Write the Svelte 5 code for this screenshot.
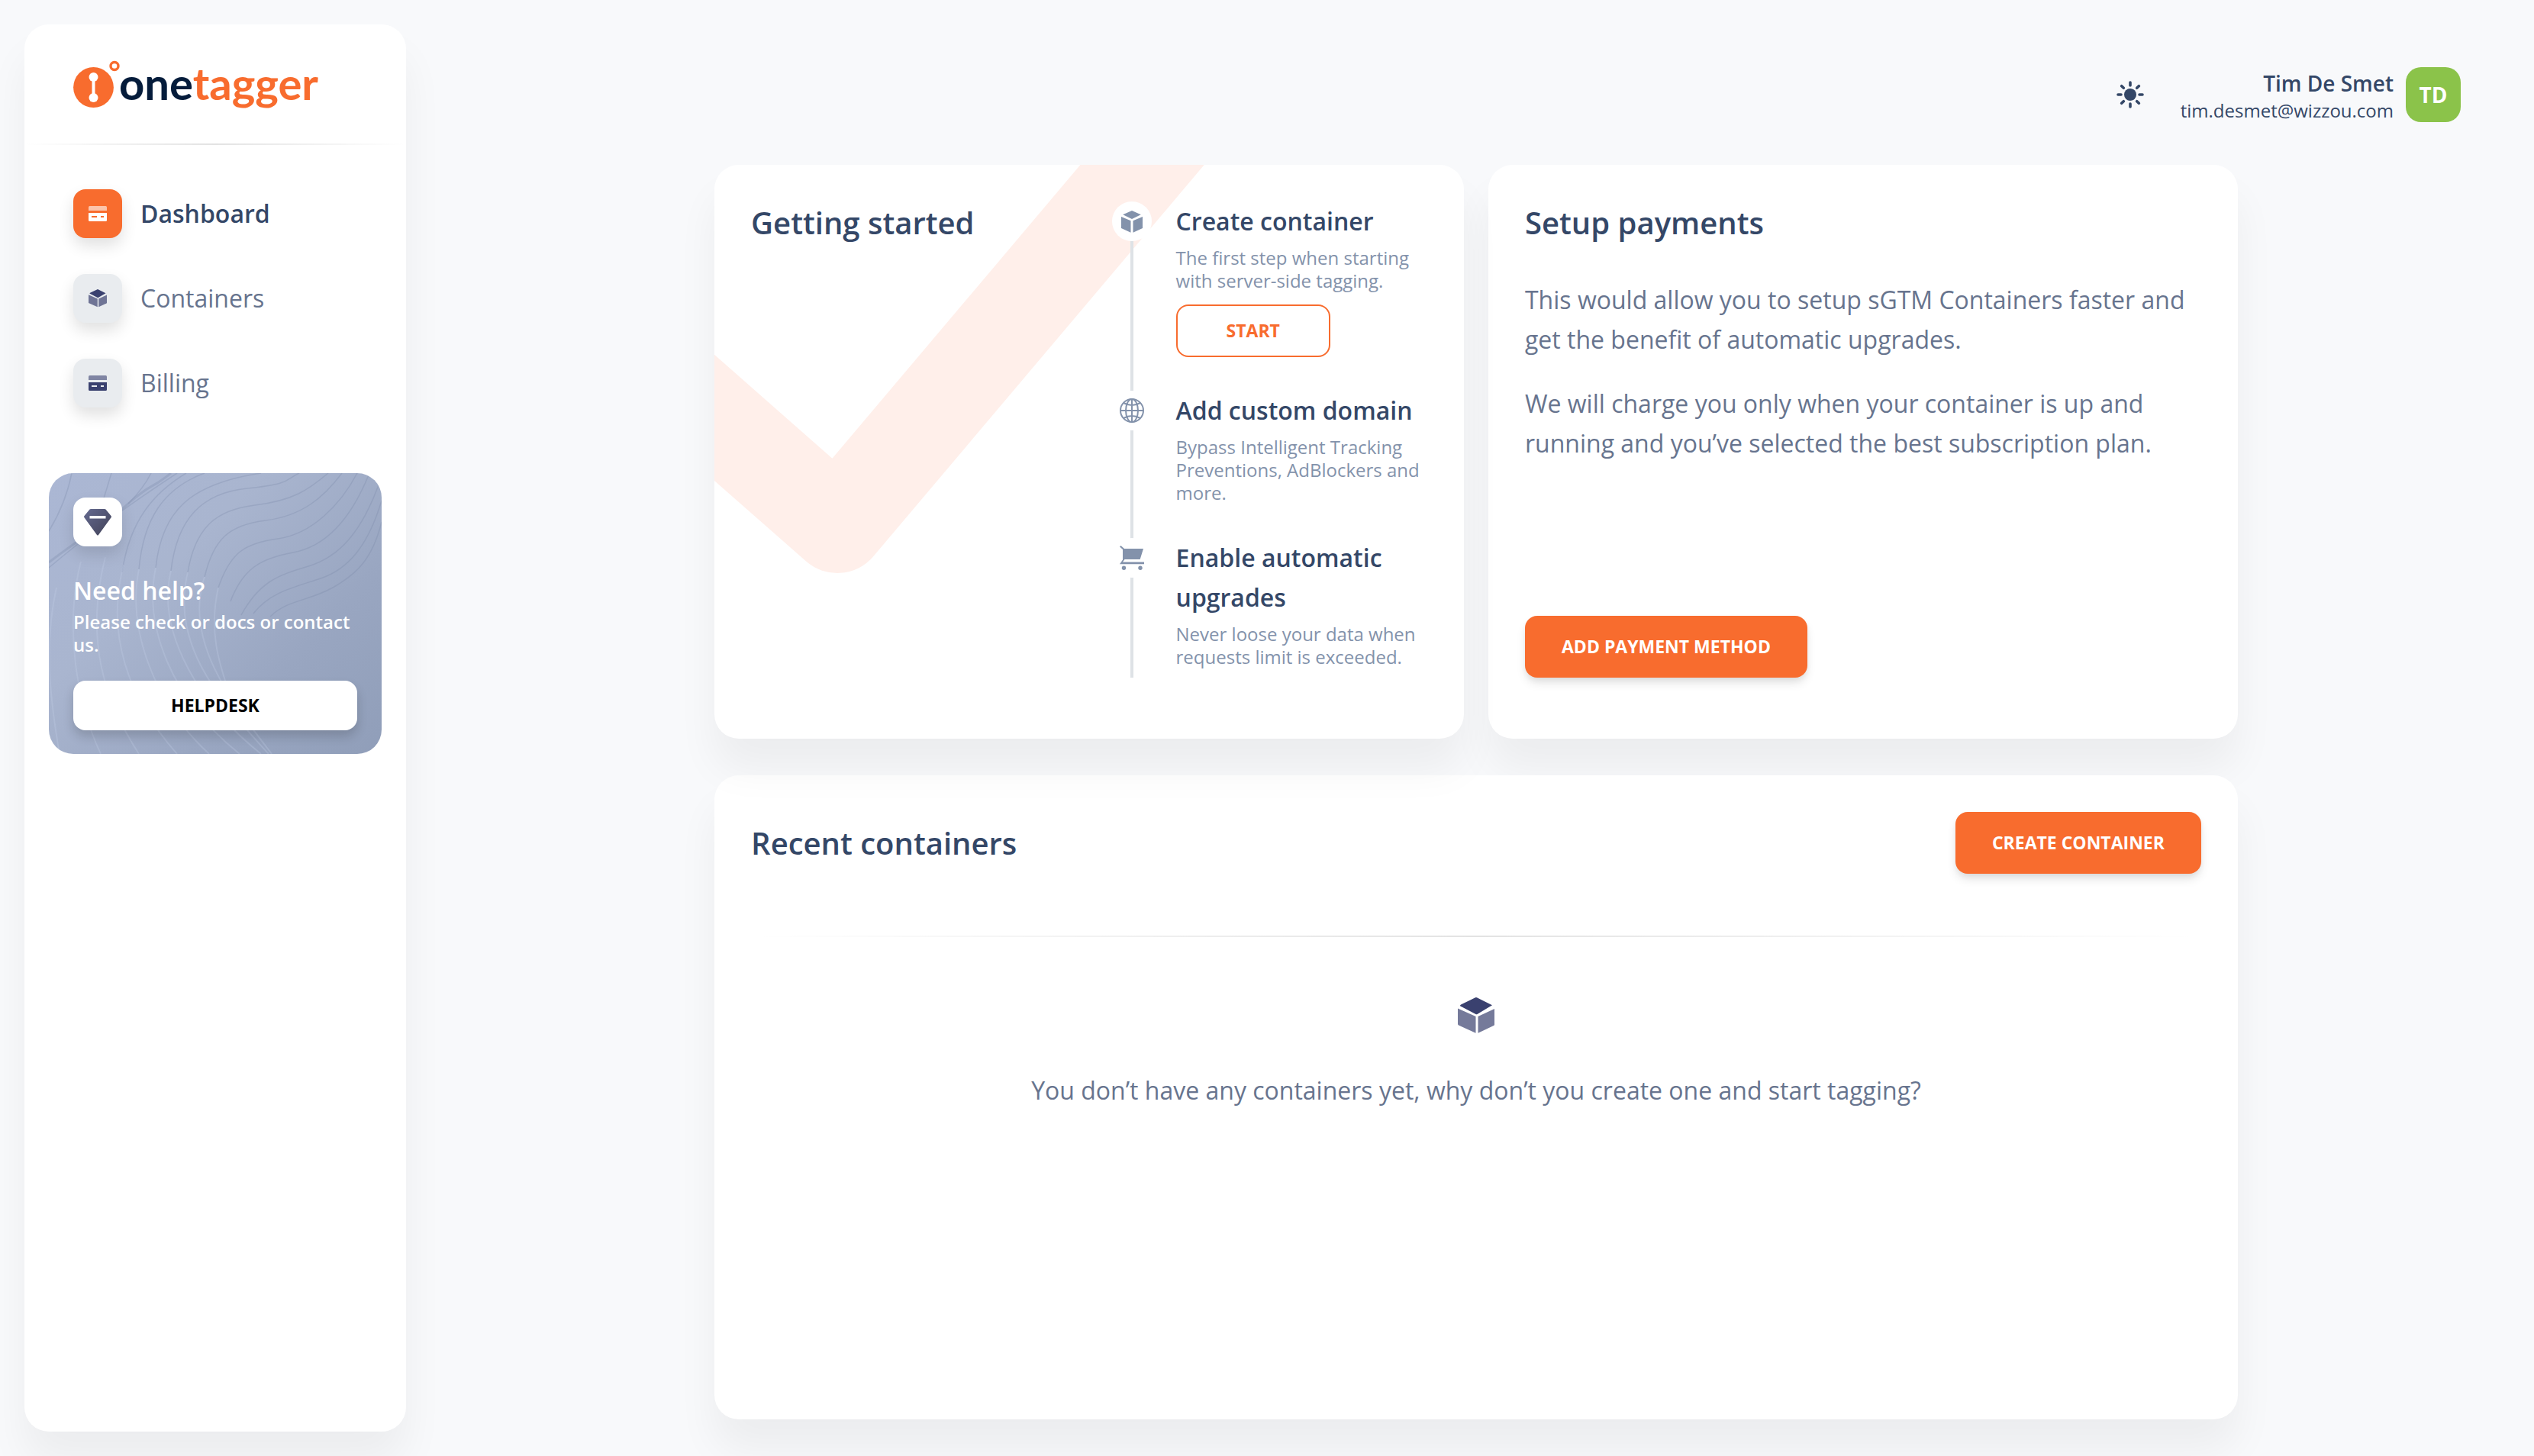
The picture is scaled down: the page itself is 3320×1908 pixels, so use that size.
<script lang="ts">
	type Icon = 'card' | 'cube' | 'globe' | 'cart';

	interface NavItem {
		label: string;
		icon: Icon;
		active?: boolean;
	}

	interface Step {
		title: string;
		text: string;
		icon: Icon;
		action?: string;
	}

	const navItems: NavItem[] = [
		{ label: 'Dashboard', icon: 'card', active: true },
		{ label: 'Containers', icon: 'cube' },
		{ label: 'Billing', icon: 'card' }
	];

	const steps: Step[] = [
		{
			title: 'Create container',
			text: 'The first step when starting with server-side tagging.',
			icon: 'cube',
			action: 'Start'
		},
		{
			title: 'Add custom domain',
			text: 'Bypass Intelligent Tracking Preventions, AdBlockers and more.',
			icon: 'globe'
		},
		{
			title: 'Enable automatic upgrades',
			text: 'Never loose your data when requests limit is exceeded.',
			icon: 'cart'
		}
	];
</script>

{#snippet cube()}
	<svg class="cube" viewBox="0 0 48 47" aria-hidden="true">
		<path d="M4 9.4 23 .3q1-.4 2 0l20 10-19.500 11.700q-1 .5-2 0L3.500 11.500q-1.200-1 .5-2.100Z" />
		<path class="side" d="M0 14.500 23.500 25v21.700L1 36.400Q0 36 0 35Z" />
		<path class="side" d="M48 15v20.500q0 1-1 1.500L26.500 46.700V25Z" />
	</svg>
{/snippet}

{#snippet creditCard()}
	<svg class="credit-card" viewBox="0 0 24 20" aria-hidden="true">
		<path class="stripe" d="M1.500 0h21Q24 0 24 1.500V6H0V1.500Q0 0 1.500 0Z" />
		<path
			fill-rule="evenodd"
			d="M0 9h24v9.500q0 1.500-1.500 1.500h-21Q0 20 0 18.500ZM4 13v2h7v-2Zm12 0v2h4v-2Z"
		/>
	</svg>
{/snippet}

<div class="layout">
	<aside class="sidebar">
		<a class="brand" href="#home" aria-label="onetagger">
			<svg width="340" height="80" viewBox="0 -8 340 80">
				<circle cx="26.500" cy="38.500" r="26.400" fill="#f86c2e" />
				<g fill="#fff">
					<circle cx="26.500" cy="25" r="6" />
					<circle cx="26.500" cy="52" r="6" />
					<path d="M24.500 25h4v27h-4z" />
				</g>
				<circle cx="54" cy="10.500" r="5" fill="none" stroke="#f86c2e" stroke-width="3.400" />
				<text class="wordmark" x="60" y="55"
					><tspan class="one">one</tspan><tspan class="tagger">tagger</tspan></text
				>
			</svg>
		</a>
		<hr />

		<nav>
			{#each navItems as item}
				<a class="nav-link" class:active={item.active} href="#{item.label.toLowerCase()}">
					<span class="icon-box">
						{#if item.icon === 'cube'}{@render cube()}{:else}{@render creditCard()}{/if}
					</span>
					{item.label}
				</a>
			{/each}
		</nav>

		<section class="help">
			<svg class="waves" viewBox="0 0 436 368" preserveAspectRatio="none" aria-hidden="true">
				<g class="dark">
					<path d="M0 124C50 82 92 50 168 0" />
					<path class="thick" d="M0 117C42 84 70 70 104 40S130 24 160 0" />
					<path d="M0 76Q22 40 30 0M66 52Q76 20 82 0M104 40Q124 20 134 0" />
					<path d="M96 130C106 60 140 24 180 0" />
					<path d="M118 126C124 60 150 20 204 0" />
					<path d="M140 124C148 50 184 14 278 0" />
					<path d="M160 128C168 60 200 26 260 20S310 8 328 0" />
					<path d="M182 130C192 70 220 48 270 42S340 22 366 0" />
					<path d="M204 136C216 86 236 68 284 62S360 32 384 0" />
					<path d="M222 150C238 104 256 92 300 86S382 42 404 0" />
					<path d="M238 168C254 126 276 112 320 104S396 60 420 0" />
					<path d="M252 186C276 142 300 134 340 122S410 78 434 10" />
					<path d="M268 184C290 156 320 150 356 138S418 96 436 36" />
					<path d="M290 188C312 166 340 168 372 150S424 112 436 64" />
				</g>
				<g class="light">
					<path d="M10 150C-8 230 4 310 14 368M42 116C20 200 36 300 68 368" />
					<path d="M74 110C46 220 74 300 118 368M98 120C74 210 104 296 168 368" />
					<path d="M118 126C102 206 140 304 210 368M140 124C124 200 160 296 250 368" />
					<path d="M160 128C140 210 200 306 278 368M182 130C160 220 216 290 288 368" />
					<path d="M204 136C176 220 240 300 292 368M222 150C206 220 232 270 240 300" />
				</g>
			</svg>
			<span class="icon-box">
				<svg class="gem" viewBox="0 0 36 35" aria-hidden="true">
					<defs>
						<linearGradient id="gem" x1="0" y1="0" x2="1" y2="1">
							<stop offset="0" stop-color="#656a90" />
							<stop offset="1" stop-color="#404156" />
						</linearGradient>
					</defs>
					<path
						fill="url(#gem)"
						fill-rule="evenodd"
						d="M9 0h18q1 0 1.500.6L35.500 9q.8 1 .2 2L19 34q-1 1.200-2 0L.3 11q-.6-1 .2-2L7.500.6Q8 0 9 0ZM7.500 9v3.500h21V9Z"
					/>
				</svg>
			</span>
			<h6>Need help?</h6>
			<p>Please check or docs or contact us.</p>
			<a class="helpdesk" href="#helpdesk">Helpdesk</a>
		</section>
	</aside>

	<main>
		<header>
			<button class="theme" aria-label="Toggle theme">
				<svg width="36" height="36" viewBox="0 0 36 36">
					<circle cx="18" cy="18" r="8" fill="currentColor" />
					<path
						fill="none"
						stroke="currentColor"
						stroke-width="3.600"
						stroke-linecap="round"
						d="M18 2v4M18 30v4M2 18h4M30 18h4M6.700 6.700l2.600 2.600M26.700 26.700l2.600 2.600M6.700 29.300l2.600-2.600M26.700 9.300l2.600-2.600"
					/>
				</svg>
			</button>
			<div class="user">
				<strong>Tim De Smet</strong>
				<span>tim.desmet@wizzou.com</span>
			</div>
			<div class="avatar">TD</div>
		</header>

		<div class="cards">
			<section class="card started">
				<svg class="check" width="660" height="560" viewBox="0 0 660 560" aria-hidden="true">
					<polyline points="-80,261 161,473 640,-94" />
				</svg>
				<h5>Getting started</h5>
				<ol class="timeline">
					{#each steps as step}
						<li>
							<span class="step-icon">
								{#if step.icon === 'cube'}
									<svg width="28" height="29" viewBox="0 0 28 29">
										<path d="M2.200 5.200 14 0l11.800 5.200L14 11ZM0 8l12.500 5.300v15.500L0 23ZM28 8v15l-12.500 5.800V13.300Z" />
									</svg>
								{:else if step.icon === 'globe'}
									<svg class="line" width="32" height="32" viewBox="0 0 32 32">
										<circle cx="16" cy="16" r="15" />
										<ellipse cx="16" cy="16" rx="8" ry="15" />
										<path d="M1 16h30M16 1v30M5 6q11 6 22 0M5 26q11-6 22 0" />
									</svg>
								{:else}
									<svg width="32" height="32" viewBox="0 0 32 32">
										<path d="M1.500 0 6 4h25l-4.300 14H6.500L4 21.500h28v2.800H0L4 18.500V5L0 1.500Z" />
										<circle cx="5.500" cy="29.300" r="2.700" />
										<circle cx="27" cy="29.300" r="2.700" />
									</svg>
								{/if}
							</span>
							<h6>{step.title}</h6>
							<p>{step.text}</p>
							{#if step.action}
								<button class="btn outline">{step.action}</button>
							{/if}
						</li>
					{/each}
				</ol>
			</section>

			<section class="card payments">
				<h5>Setup payments</h5>
				<p>
					This would allow you to setup sGTM Containers faster and get the benefit of automatic
					upgrades.
				</p>
				<p>
					We will charge you only when your container is up and running and you’ve selected the best
					subscription plan.
				</p>
				<button class="btn">Add payment method</button>
			</section>

			<section class="card recent">
				<div class="recent-head">
					<h5>Recent containers</h5>
					<button class="btn">Create container</button>
				</div>
				<hr />
				<div class="empty">
					{@render cube()}
					<p>You don’t have any containers yet, why don’t you create one and start tagging?</p>
				</div>
			</section>
		</div>
	</main>
</div>

<style>
	:global(body) {
		margin: 0;
		background: #f8f9fb;
	}

	.layout {
		display: flex;
		gap: 16px;
		min-height: 100vh;
		color: #67748e;
		font-family: 'Open Sans', 'Noto Sans', sans-serif;
		font-size: 32px;
		line-height: 52px;
		overflow: hidden;
	}

	.layout,
	.layout * {
		box-sizing: border-box;
	}

	h5,
	h6,
	p,
	ol {
		margin: 0;
		padding: 0;
	}

	h5,
	h6 {
		color: #344767;
		font-weight: 600;
	}

	h5 {
		font-size: 40px;
		line-height: 55px;
	}

	h6 {
		font-size: 32px;
	}

	hr {
		width: 100%;
		height: 2px;
		margin: 0;
		border: 0;
		background: linear-gradient(90deg, transparent, rgba(0, 0, 0, 0.11), transparent);
	}

	a {
		color: inherit;
		text-decoration: none;
	}

	button {
		font-family: inherit;
		cursor: pointer;
	}

	/* Sidebar */
	.sidebar {
		display: flex;
		flex-direction: column;
		flex: 0 0 500px;
		margin: 32px 0 32px 32px;
		padding-top: 36px;
		border-radius: 32px;
		background: #fff;
		box-shadow: 0 40px 54px rgba(0, 0, 0, 0.05);
	}

	.brand {
		margin: 0 64px 40px;
		line-height: 0;
	}

	.wordmark {
		font-family: Lato, 'Open Sans', sans-serif;
		font-size: 58px;
		font-weight: 700;
		line-height: 1;
	}

	.one {
		fill: #051c3b;
	}

	.tagger {
		fill: #f86c2e;
	}

	nav {
		display: flex;
		flex-direction: column;
		gap: 47px;
		padding: 58px 64px 86px;
	}

	.nav-link {
		display: flex;
		align-items: center;
		gap: 24px;
	}

	.nav-link.active {
		color: #344767;
		font-weight: 600;
	}

	.icon-box {
		display: flex;
		align-items: center;
		justify-content: center;
		width: 64px;
		height: 64px;
		border-radius: 16px;
		background: #e9ecef;
		box-shadow: 0 10px 20px rgba(0, 0, 0, 0.12);
	}

	.cube,
	.credit-card {
		width: 24px;
		fill: #3a416f;
	}

	.side {
		opacity: 0.7;
	}

	.stripe {
		opacity: 0.6;
	}

	.active .icon-box {
		background: #f86c2e;
	}

	.active .credit-card {
		fill: #fff;
	}

	.help {
		position: relative;
		margin: 0 32px;
		padding: 32px 32px 31px;
		border-radius: 32px;
		background: linear-gradient(135deg, #abb7d4 0%, #a9b5cf 35%, #99a6c1 70%, #909eb9 100%);
		color: #fff;
		overflow: hidden;
	}

	.help > :not(.waves) {
		position: relative;
	}

	.waves {
		position: absolute;
		inset: 0;
		width: 100%;
		height: 100%;
		fill: none;
	}

	.dark {
		stroke: rgba(120, 134, 166, 0.28);
		stroke-width: 1.5;
	}

	.thick {
		stroke-width: 3;
	}

	.light {
		stroke: rgba(200, 212, 236, 0.25);
		stroke-width: 2;
	}

	.help .icon-box {
		background: #fff;
	}

	.gem {
		width: 36px;
	}

	.help h6 {
		margin-top: 32px;
		color: #fff;
	}

	.help p {
		font-size: 24px;
		font-weight: 600;
		line-height: 30px;
	}

	.helpdesk {
		display: block;
		margin-top: 32px;
		padding: 16px;
		border-radius: 16px;
		background: #fff;
		box-shadow: 0 8px 14px rgba(20, 20, 20, 0.18);
		color: #000;
		font-size: 23px;
		font-weight: 700;
		line-height: 33px;
		text-align: center;
		text-transform: uppercase;
	}

	/* Top bar */
	main {
		flex: 1;
		min-width: 0;
	}

	header {
		display: flex;
		align-items: center;
		justify-content: flex-end;
		padding: 88px 96px 56px 0;
		color: #344767;
	}

	.theme {
		margin-right: 48px;
		padding: 0;
		border: 0;
		background: none;
		color: inherit;
		line-height: 0;
	}

	.user {
		display: flex;
		flex-direction: column;
		margin-right: 16px;
		font-size: 24px;
		line-height: 30px;
		text-align: right;
	}

	.user strong {
		font-size: 28px;
		font-weight: 600;
		line-height: 42px;
	}

	.avatar {
		width: 72px;
		height: 72px;
		border-radius: 20px;
		background: #8bc34a;
		color: #fff;
		font-size: 28px;
		font-weight: 700;
		line-height: 72px;
		text-align: center;
	}

	/* Cards */
	.cards {
		display: grid;
		grid-template-columns: 1fr 1fr;
		gap: 48px 32px;
		width: 72%;
		margin: 0 auto;
		padding-bottom: 32px;
	}

	.card {
		padding: 48px 48px 80px;
		border-radius: 32px;
		background: #fff;
		box-shadow: 0 40px 54px rgba(0, 0, 0, 0.05);
	}

	.started {
		position: relative;
		display: grid;
		grid-template-columns: 8fr 7fr;
		overflow: hidden;
	}

	.started > :not(.check) {
		position: relative;
	}

	.check {
		position: absolute;
		top: 0;
		left: 0;
		fill: none;
		stroke: #ffefea;
		stroke-width: 124;
		stroke-linejoin: round;
	}

	.timeline {
		list-style: none;
	}

	.timeline li {
		position: relative;
		padding: 0 0 44px 84px;
	}

	.timeline li:last-child {
		padding-bottom: 12px;
	}

	.timeline li::before {
		content: '';
		position: absolute;
		top: 0;
		bottom: 0;
		left: 24px;
		width: 4px;
		background: #dee2e6;
	}

	.timeline p {
		margin-top: 7px;
		color: #8392ab;
		font-size: 24px;
		line-height: 30px;
	}

	.step-icon {
		position: absolute;
		top: 0;
		left: 0;
		display: flex;
		align-items: center;
		justify-content: center;
		width: 52px;
		height: 52px;
		border-radius: 50%;
		background: #fff;
		fill: #8392ab;
	}

	.line {
		fill: none;
		stroke: #8392ab;
		stroke-width: 2;
	}

	.btn {
		padding: 24px 48px;
		border: 0;
		border-radius: 16px;
		background: #f86c2e;
		box-shadow:
			0 8px 14px -2px rgba(20, 20, 20, 0.12),
			0 4px 8px -2px rgba(20, 20, 20, 0.07);
		color: #fff;
		font-size: 23px;
		font-weight: 700;
		line-height: 33px;
		text-transform: uppercase;
	}

	.btn.outline {
		display: block;
		margin-top: 16px;
		padding: 16px 64px;
		border: 2px solid #f86c2e;
		background: none;
		box-shadow: none;
		color: #f86c2e;
	}

	.payments {
		display: flex;
		flex-direction: column;
		align-items: flex-start;
	}

	.payments h5 {
		margin-bottom: 48px;
	}

	.payments p {
		margin-bottom: 32px;
	}

	.payments .btn {
		margin-top: auto;
	}

	.recent {
		grid-column: 1 / -1;
		min-height: 844px;
	}

	.recent-head {
		display: flex;
		align-items: center;
		justify-content: space-between;
		margin-bottom: 81px;
	}

	.empty {
		display: flex;
		flex-direction: column;
		align-items: center;
		gap: 49px;
		padding-top: 79px;
		text-align: center;
	}

	.empty .cube {
		width: 48px;
	}
</style>
